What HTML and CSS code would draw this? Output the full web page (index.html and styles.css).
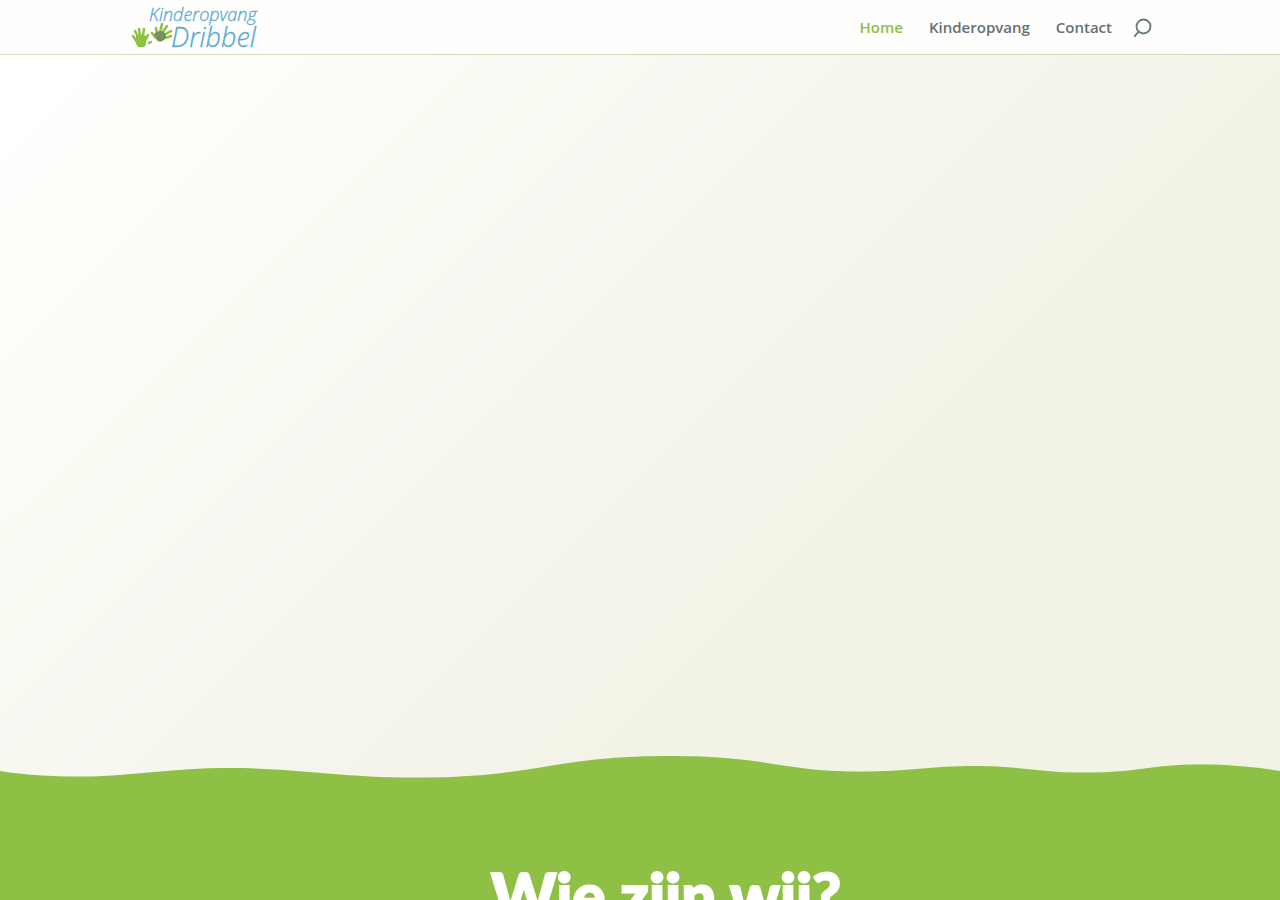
FILE: index.html
```html
<!DOCTYPE html>
<html lang="nl">
	<head>
		<meta charset="UTF-8">
		<title>Kinderopvang Dribbel</title>
		<link rel="stylesheet" href="styles.css">
	</head>
	<body>
		<header id="main-header">
			<div class="container">
				<a class="logo" href="#" aria-label="Kinderopvang Dribbel">
					<svg width="136" height="54" viewBox="0 0 136 54">
						<!-- linkerhand -->
						<g class="hand">
							<path d="M8 36 Q13 33 18 36 L18 43 Q18 48 13 47 Q9 48 8 43 Z"/>
							<path class="finger" d="M9 42 L5 36 M10 37 L7 31 M12 36 L11 29 M15 36 L16 29 M17 41 L20 35"/>
							<path class="thumb" d="M21 43 L23 42"/>
						</g>
						<!-- rechterhand -->
						<g class="hand">
							<path class="finger" d="M27 37 L24 33 M29 34 L28 28 M32 32 L34 24 M34 33 L39 26 M36 35 L43 31 M37 38 L43 36"/>
							<path class="palm" d="M26 34 Q31 29 36 32 Q40 36 36 40 Q31 44 28 39 Z"/>
						</g>
						<text class="logo-small" x="21" y="21">Kinderopvang</text>
						<text class="logo-large" x="43" y="47">Dribbel</text>
					</svg>
				</a>
				<nav>
					<ul>
						<li><a class="active" href="#">Home</a></li>
						<li><a href="#">Kinderopvang</a></li>
						<li><a href="#">Contact</a></li>
					</ul>
					<button class="search" type="button" aria-label="Zoeken">
						<svg width="20" height="24" viewBox="0 0 20 24">
							<circle cx="11.5" cy="11.5" r="7"/>
							<path d="M6.8 16.5 L2.3 21.7"/>
						</svg>
					</button>
				</nav>
			</div>
		</header>
		<section class="hero">
			<svg class="wave" viewBox="0 0 1280 30" preserveAspectRatio="none">
				<path d="M0 16 C25 20 50 21.5 80 21.5 C130 21.5 170 13 230 13 C300 13 340 22.5 415 22.5 C540 22.5 550 1 670 1 C770 1 780 16.5 860 16.5 C910 16.5 930 11 975 11 C1020 11 1040 17.5 1085 17.5 C1140 17.5 1150 9.5 1200 9.5 C1230 9.5 1255 12 1280 16 V30 H0 Z"/>
			</svg>
		</section>
		<section class="about">
			<div class="container">
				<h1>Wie zijn wij?</h1>
			</div>
		</section>
	</body>
</html>
```
FILE: styles.css
```css
body,ul,h1{
	margin: 0;
	padding: 0;
}
body{
	font-family: "Open Sans", sans-serif;
	color: #666;
	background-color: #fff;
}
.container{
	width: 80%;
	margin: 0 auto;
}
/* header */
#main-header{
	background-color: #fefefc;
	border-bottom: 1px solid #cddcc0;
}
#main-header .container{
	display: flex;
	justify-content: space-between;
	align-items: center;
	height: 54px;
}
.logo svg{
	display: block;
}
.logo text{
	font-family: "Open Sans", sans-serif;
	font-weight: 300;
	font-style: italic;
	fill: #5aa9d2;
	stroke: #5aa9d2;
	stroke-width: 0.3;
}
.logo .logo-small{
	font-size: 18px;
}
.logo .logo-large{
	font-size: 27px;
}
.hand{
	fill: #8ec045;
}
.hand .palm{
	fill: #76905a;
}
.finger,.thumb{
	fill: none;
	stroke: #8ec045;
	stroke-width: 2.5;
	stroke-linecap: round;
}
nav{
	display: flex;
	align-items: center;
}
nav ul{
	display: flex;
	gap: 26px;
	list-style: none;
}
nav a{
	color: #667074;
	font-size: 15px;
	font-weight: 600;
	line-height: 20px;
	text-decoration: none;
}
nav a.active{
	color: #8ec045;
}
.search{
	margin-left: 20px;
	padding: 0;
	border: 0;
	background: none;
	cursor: pointer;
}
.search svg{
	display: block;
	fill: none;
	stroke: #667780;
	stroke-width: 1.8;
}
/* hero */
.hero{
	display: flex;
	align-items: flex-end;
	min-height: 730px;
	background: linear-gradient(135deg, #fff 2%, #fcfcf6 20%, #f6f6ef 46%, #f2f2e6 68%);
}
.wave{
	display: block;
	width: 100%;
	height: 30px;
	fill: #8ec045;
}
/* wie zijn wij */
.about{
	padding: 74px 0 72px;
	background-color: #8ec045;
}
.about h1{
	padding-left: 52px;
	font-family: Lato, sans-serif;
	font-size: 62px;
	font-weight: 900;
	line-height: 72px;
	text-align: center;
	color: #fff;
	-webkit-text-stroke: 2px #fff;
}
```
